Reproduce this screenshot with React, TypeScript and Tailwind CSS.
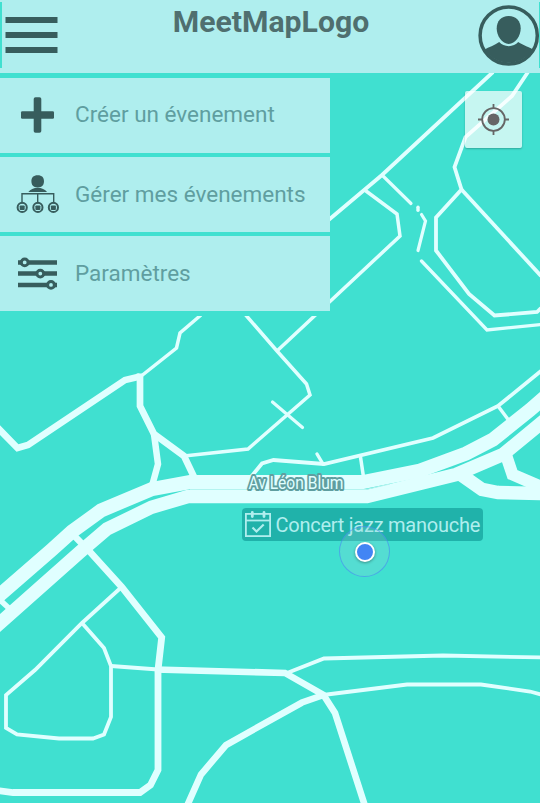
import type { ReactNode } from "react";

type Road = { points: string; width: number; round?: boolean };

const roads: Road[] = [
  { points: "-4,426 17.5,448 28,445 125,380 140,376.5", width: 6.7 },
  { points: "140,373.5 140,406 154,434 184,456 195,479", width: 6.7 },
  { points: "154,434 158,464 152,486", width: 6.5 },
  { points: "140,377 176.5,348 180,333 201,315", width: 3.5 },
  { points: "184,456 248,449 310,395 306.500,384 277,351 244,313", width: 3.5 },
  { points: "277,351 400,236 397,214 364,189.5", width: 3.5 },
  { points: "272.500,402 302.500,427.500", width: 3.2, round: true },
  { points: "325,223 382,175 493,72", width: 3.8 },
  { points: "382,175 411,203.500", width: 3.2, round: true },
  { points: "418,207.300 418,210.300", width: 3.4, round: true },
  { points: "421.500,214.500 425.500,221 418,250.500", width: 3.2, round: true },
  { points: "421.500,261 487,330 541,324.500", width: 3.3, round: true },
  { points: "528,72 512,96 465.500,137 454.500,167 461.500,189.500 436,217.500 436,250.500 469,294 494.500,315.500 537,312 541,308", width: 3.8 },
  { points: "461.500,189.500 541,276", width: 3.8 },
  { points: "251,477 262,463.500 273.500,460 324,464 433,438 498,406 541,371", width: 3.8 },
  { points: "317,454 323,464", width: 3.4, round: true },
  { points: "360.500,457 363.500,477", width: 3.5 },
  { points: "498,406 508.500,420", width: 3.5 },
  { points: "-5,599 51.500,550 72,531.500 101,510.500 152,489 190,482 363,482 420,470.500 466,453.500 493,439.500 530,410 546,396", width: 14 },
  { points: "-5,627.500 80,552 107,529 151.500,507.300 188,496.500 367,496.500 456,474.500 503,454.500 546,419", width: 13.4 },
  { points: "460,474 482,489.500 498,492.600 545,493.500", width: 13.5 },
  { points: "505,452 512.500,474.500 546,489", width: 12 },
  { points: "73,534.500 91,553 121.700,587 161.700,637.500 158,670 158,770 150.500,785 140,792.500 13,792.500 -3,790.500", width: 6.8 },
  { points: "0,600 12,611", width: 5.5 },
  { points: "120.500,588 82,623 35,670 6,695 6,728 17,734.500 59,738.500 93,738.500 104,734.500 111,717 111,666 104,648 82,623", width: 3.8 },
  { points: "111,666 158,669.500", width: 3.8 },
  { points: "155,669.500 285,673 323.500,695 335,713 365,806", width: 6.6 },
  { points: "323.500,695 302,702.500 226,745 201,774.500 187,806", width: 6.6 },
  { points: "287,673 324,658.500 443,655.500 542,657.500", width: 3.8 },
  { points: "323,695 407,684.500 481,684.500 530,691.500 543,695", width: 3.8 },
];

function StreetMap() {
  return (
    <svg className="absolute inset-0 h-full w-full" viewBox="0 73 540 730" fill="none" stroke="#e0ffff" strokeLinejoin="miter">
      {roads.map((road, i) => (
        <polyline key={i} points={road.points} strokeWidth={road.width} strokeLinecap={road.round ? "round" : "butt"} />
      ))}
      <path d="M190 489.500H366L390 484" stroke="#b4f4f0" strokeWidth="1" />
      <text x="248.500" y="489" textLength="95" lengthAdjust="spacingAndGlyphs" className="font-[Roboto,sans-serif] text-[17.500px]" fill="#e0ffff" stroke="#5f9ea0" strokeWidth="4" strokeLinejoin="round" paintOrder="stroke">
        Av Léon Blum
      </text>
    </svg>
  );
}

function MenuIcon() {
  return (
    <svg className="mt-[17px] ml-[5px] h-9 w-[54px]" viewBox="5 17 54 36" fill="#375d5d">
      <path d="M5.500 17h52v6h-52zM5.500 32h52v6h-52zM5.500 47h52v6h-52z" />
    </svg>
  );
}

function AvatarIcon() {
  return (
    <svg className="mt-[5px] h-[62px] w-[62px]" viewBox="477.500 4.500 62 62" fill="#375d5d">
      <circle cx="508.200" cy="35" r="28.600" fill="none" stroke="#375d5d" strokeWidth="3.500" />
      <path d="M508.200 15.500C515.700 15.500 520.200 20.500 520.200 28C520.200 35.500 514.700 43.400 508.200 43.400S496.200 35.500 496.200 28C496.200 20.500 500.700 15.500 508.200 15.500Z" />
      <path d="M484.200 49C488 46.500 494 45 498.700 41.500C503 47 513.500 47 517.700 41.500C523 45 529 46.500 532.200 49A28.500 28.500 0 0 1 484.200 49Z" />
    </svg>
  );
}

function PlusIcon() {
  return (
    <svg className="h-11 w-11" viewBox="0 0 44 44" fill="#375d5d">
      <rect x="18.700" y="4.300" width="7.600" height="35.400" rx="1.800" />
      <rect x="6" y="18.300" width="33" height="7.400" rx="1.300" />
    </svg>
  );
}

function TeamIcon() {
  return (
    <svg className="h-11 w-11" viewBox="0 0 44 44" fill="#375d5d">
      <path d="M22.700 3.300c4.300 0 6.300 2.200 6.300 6s-2 6.200-6.300 6.200-6.300-2.400-6.300-6.200 2-6 6.300-6Z" />
      <path d="M13.300 20c2-2.600 5.500-4.300 9.400-4.300s7.400 1.700 9.400 4.300Z" />
      <path d="M22.700 21v10.500M7 31.500V21.700h31.700v9.800" fill="none" stroke="#375d5d" strokeWidth="1.400" />
      {[7.2, 22.9, 38.4].map((x) => (
        <g key={x}>
          <circle cx={x} cy="35.400" r="4.600" fill="none" stroke="#375d5d" strokeWidth="2" />
          <rect x={x - 2.5} y="33.500" width="5" height="4.500" rx="0.800" />
        </g>
      ))}
    </svg>
  );
}

function SlidersIcon() {
  return (
    <svg className="h-11 w-11" viewBox="0 0 44 44" fill="none" stroke="#375d5d">
      <path d="M3 10.400h39M3 21.600h39M3 32.900h39" strokeWidth="4.500" />
      <g strokeWidth="3" fill="#afeeee">
        <circle cx="9.700" cy="10.400" r="3.400" />
        <circle cx="25.300" cy="21.600" r="3.400" />
        <circle cx="36" cy="32.900" r="3.400" />
      </g>
    </svg>
  );
}

function MenuItem({ icon, label }: { icon: ReactNode; label: string }) {
  return (
    <li className="flex h-[75px] items-center bg-[#afeeee] pl-[15px]">
      {icon}
      <span className="mb-px ml-4 text-[22.500px] leading-none whitespace-nowrap text-[#5f9ea0]">{label}</span>
    </li>
  );
}

export default function App() {
  return (
    <div className="flex h-[803px] w-[540px] flex-col overflow-hidden bg-[#40e0d0] font-[Roboto,sans-serif]">
      <header className="relative flex h-[73px] items-start justify-between bg-[#afeeee]">
        <span className="absolute top-[2px] left-0 h-[66px] w-[1.500px] bg-[#40e0d0]" />
        <span className="absolute top-[2px] right-0 h-[66px] w-px bg-[#40e0d0]" />
        <MenuIcon />
        <h1 className="mt-[4px] ml-[5px] text-[30.200px] leading-[36px] font-bold text-[#4f6f6f]">MeetMapLogo</h1>
        <AvatarIcon />
      </header>
      <main className="relative flex-1">
        <StreetMap />
        <div className="relative flex items-start justify-between">
          <ul className="flex w-[330px] flex-col gap-[4.400px] bg-[#40e0d0] pt-[4.500px] pb-[4.500px]">
            <MenuItem icon={<PlusIcon />} label="Créer un évenement" />
            <MenuItem icon={<TeamIcon />} label="Gérer mes évenements" />
            <MenuItem icon={<SlidersIcon />} label="Paramètres" />
          </ul>
          <button className="mt-[18px] mr-[18px] flex h-[57px] w-[57px] items-center justify-center rounded-[2px] bg-white/70 shadow-[0_1px_2px_rgba(0,0,0,0.25)]">
            <svg className="h-8 w-8" viewBox="-15.500 -15.500 32 32" fill="none" stroke="#666" strokeWidth="1.800">
              <circle r="11.300" />
              <circle r="6" fill="#666" stroke="none" />
              <path d="M0-15.500v5M0 15.500v-5M-15.500 0h5M15.500 0h-5" />
            </svg>
          </button>
        </div>
        <div className="absolute top-[435px] left-[242px] flex h-[33px] w-[241px] items-center rounded-[4px] bg-[#20b2aa] pl-[3px]">
          <svg className="mb-px h-7 w-[26px] shrink-0" viewBox="0 0 26 28" fill="none" stroke="#afeeee" strokeWidth="1.800">
            <rect x="0.900" y="3.900" width="24.200" height="22.200" />
            <path d="M1 10.500h24" />
            <path d="M7.300 2.500v4M19 2.500v4" strokeWidth="2.800" strokeLinecap="round" />
            <path d="m7.500 17.500 4 4 7.200-7" strokeWidth="2.200" />
          </svg>
          <span className="mt-px ml-[4.500px] text-[20px] leading-none tracking-[-0.250px] whitespace-nowrap text-[#afeeee]">Concert jazz manouche</span>
        </div>
        <div className="absolute top-[453px] left-[339px] flex size-[51px] items-center justify-center rounded-full border border-[#4285f4]/60 bg-[#8ed2d6]/25">
          <span className="size-5 rounded-full border-2 border-white bg-[#4285f4] shadow-[0_1px_3px_rgba(0,0,0,0.35)]" />
        </div>
      </main>
    </div>
  );
}
